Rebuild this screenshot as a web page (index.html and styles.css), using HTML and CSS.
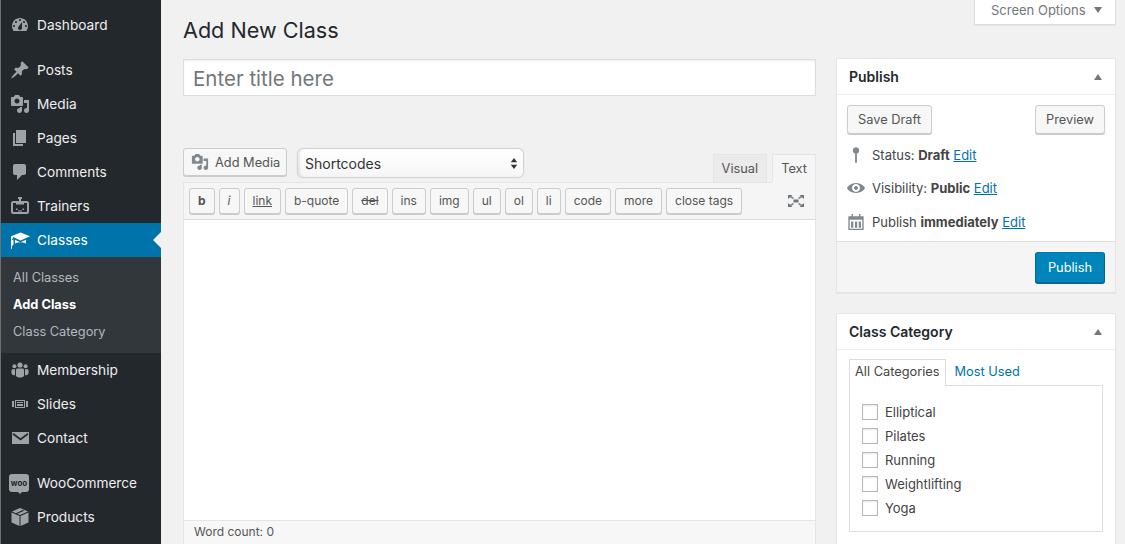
FILE: index.html
```html
<!DOCTYPE html>
<html lang="en">
<head>
  <meta charset="UTF-8">
  <title>Add New Class</title>
  <link rel="stylesheet" href="styles.css">
</head>

<body>

  <!-- Admin menu -->
  <div class="sidebar">
    <a class="menu-item"><svg viewBox="0 0 20 20"><path d="M3.76 16h12.48c1.1-1.37 1.76-3.11 1.76-5 0-4.42-3.58-8-8-8s-8 3.58-8 8c0 1.89.66 3.63 1.76 5zM10 4c.55 0 1 .45 1 1s-.45 1-1 1-1-.45-1-1 .45-1 1-1zM6 6c.55 0 1 .45 1 1s-.45 1-1 1-1-.45-1-1 .45-1 1-1zm8 0c.55 0 1 .45 1 1s-.45 1-1 1-1-.45-1-1 .45-1 1-1zm-5.37 5.55L12 7v6c0 1.1-.9 2-2 2s-2-.9-2-2c0-.57.24-1.08.63-1.45zM4 10c.55 0 1 .45 1 1s-.45 1-1 1-1-.45-1-1 .45-1 1-1zm12 0c.55 0 1 .45 1 1s-.45 1-1 1-1-.45-1-1 .45-1 1-1z" fill-rule="evenodd"/></svg>Dashboard</a>
    <div class="menu-sep"></div>
    <a class="menu-item"><svg viewBox="0 0 20 20"><path d="M10.44 3.02l1.82-1.82 6.36 6.35-1.83 1.82c-1.05-.68-2.48-.57-3.41.36l-.75.75c-.92.93-1.04 2.35-.35 3.41l-1.83 1.82-2.41-2.41-2.8 2.79c-.42.42-3.38 2.71-3.8 2.29s1.86-3.39 2.28-3.81l2.79-2.79L4.1 9.36l1.83-1.82c1.05.69 2.48.57 3.4-.36l.75-.75c.93-.92 1.05-2.35.36-3.41z"/></svg>Posts</a>
    <a class="menu-item"><svg viewBox="0 0 20 20"><path d="M13 11V4c0-.55-.45-1-1-1h-1.67L9 1H5L3.67 3H2c-.55 0-1 .45-1 1v7c0 .55.45 1 1 1h10c.55 0 1-.45 1-1zM7 4.5c1.38 0 2.5 1.12 2.5 2.5S8.38 9.5 7 9.5 4.5 8.38 4.5 7 5.62 4.5 7 4.5zM14 6h5v10.5c0 1.38-1.12 2.5-2.5 2.5S14 17.88 14 16.5s1.12-2.5 2.5-2.5c.17 0 .34.02.5.05V9h-3V6zm-4 8.05V13h2v3.5c0 1.38-1.12 2.5-2.5 2.5S7 17.88 7 16.5 8.12 14 9.5 14c.17 0 .34.02.5.05z"/></svg>Media</a>
    <a class="menu-item"><svg viewBox="0 0 20 20"><path d="M6 15V2h10v13H6zm-1 1h8v2H3V5h2v11z"/></svg>Pages</a>
    <a class="menu-item"><svg viewBox="0 0 20 20"><path d="M5 2h9c1.1 0 2 .9 2 2v7c0 1.1-.9 2-2 2h-2l-5 5v-5H5c-1.1 0-2-.9-2-2V4c0-1.1.9-2 2-2z"/></svg>Comments</a>
    <a class="menu-item"><svg viewBox="0 0 20 20"><path d="M8 1h4v2h-1v2h6c1 0 2 1 2 2v9c0 1-1 2-2 2H3c-1 0-2-1-2-2V7c0-1 1-2 2-2h6V3H8V1zM3 7v9h14V7h-3v1.500H6V7H3zm3 5.500h1.500V14H6v-1.500zm6.500 0H14V14h-1.500v-1.500zM8 14.500h4v1H8v-1z" fill-rule="evenodd"/></svg>Trainers</a>
    <a class="menu-item current"><svg viewBox="0 0 20 20"><path d="M10.500 2.500L20 6.200l-9.500 4.300L3 7v1.500l-1 .3v10H1V6.200zM5 9.800l5.500 2.500L16 9.800v3.700c-1.800-.9-3.600-1.300-5.500-1.300S6.800 12.600 5 13.500V9.800zM2 10v6l1.500-1.500V9.500z"/></svg>Classes</a>
    <div class="submenu">
      <a>All Classes</a>
      <a class="active">Add Class</a>
      <a>Class Category</a>
    </div>
    <a class="menu-item"><svg viewBox="0 0 20 20"><circle cx="10" cy="5" r="2.600"/><circle cx="4.400" cy="6.300" r="2"/><circle cx="15.600" cy="6.300" r="2"/><path d="M7.500 8.500h5c.9 0 1.500.7 1.500 1.600V16c-1 1-2.500 1.600-4 1.600S7 17 6 16v-5.900c0-.9.6-1.600 1.500-1.600zM2.500 9.200H5v6l-1 .1C2.500 15 1.500 14 1.500 13v-2.500c0-.7.4-1.300 1-1.300zM15 9.200h2.500c.6 0 1 .6 1 1.300V13c0 1-1 2-2.500 2.300l-1-.1z"/></svg>Membership</a>
    <a class="menu-item"><svg viewBox="0 0 20 20"><path d="M5 14V6h10v8H5zm-3-1V7h2v6H2zm4-6v6h8V7H6zm10 0h2v6h-2V7zm-3 2V8H7v1h6zm0 3v-2H7v2h6z" fill-rule="evenodd"/></svg>Slides</a>
    <a class="menu-item"><svg viewBox="0 0 20 20"><path fill-rule="evenodd" d="M2 4h17v12H2zM3.500 5L10.500 10.200 17.500 5l1 1.500-8 6-8-6z"/></svg>Contact</a>
    <div class="menu-sep"></div>
    <a class="menu-item"><span class="woo-icon">woo</span>WooCommerce</a>
    <a class="menu-item"><svg viewBox="0 0 20 20"><path d="M10 1l8 3.500-8 3.500-2.800-1.200 7-3.100-1.400-.6-7 3.100L2 4.500zM1.500 5.500L9.500 9v10l-8-3.500zM10.500 9l8-3.500v10l-8 3.500z"/></svg>Products</a>
  </div>

  <!-- Page content -->
  <div class="content">
    <div class="screen-options">Screen Options <span class="arrow-down"></span></div>

    <h1 class="page-title">Add New Class</h1>

    <div class="columns">
      <div class="main-col">
        <div class="title-input">Enter title here</div>

        <div class="editor-tools">
          <a class="btn media-btn"><svg viewBox="0 0 20 20"><path d="M13 11V4c0-.55-.45-1-1-1h-1.67L9 1H5L3.67 3H2c-.55 0-1 .45-1 1v7c0 .55.45 1 1 1h10c.55 0 1-.45 1-1zM7 4.500c1.380 0 2.500 1.120 2.500 2.500S8.380 9.500 7 9.500 4.500 8.380 4.500 7 5.620 4.500 7 4.500zM14 6h5v10.500c0 1.380-1.120 2.500-2.500 2.500S14 17.880 14 16.500s1.120-2.500 2.500-2.500c.17 0 .34.02.5.05V9h-3V6zm-4 8.050V13h2v3.500c0 1.380-1.120 2.500-2.500 2.500S7 17.880 7 16.500 8.120 14 9.500 14c.17 0 .34.02.5.05z"/></svg>Add Media</a>
          <div class="shortcodes">Shortcodes<svg viewBox="0 0 10 16"><path d="M5 1l4 5.500H1zM5 15l4-5.500H1z"/></svg></div>
          <div class="editor-tabs">
            <a class="tab">Visual</a>
            <a class="tab on">Text</a>
          </div>
        </div>

        <div class="editor">
          <div class="quicktags">
            <a class="qt bold">b</a>
            <a class="qt ital">i</a>
            <a class="qt link">link</a>
            <a class="qt">b-quote</a>
            <a class="qt strike">del</a>
            <a class="qt">ins</a>
            <a class="qt">img</a>
            <a class="qt">ul</a>
            <a class="qt">ol</a>
            <a class="qt">li</a>
            <a class="qt">code</a>
            <a class="qt">more</a>
            <a class="qt">close tags</a>
            <svg class="fullscreen" viewBox="0 0 18 14"><path d="M1 1h4.500L4.200 2.300 7 4l-1 1-2.800-1.700L1 5zM17 1h-4.500l1.300 1.300L11 4l1 1 2.800-1.700L17 5zM1 13h4.500l-1.300-1.300L7 10 6 9l-2.800 1.700L1 9zM17 13h-4.500l1.300-1.300L11 10l1-1 2.800 1.700L17 9zM6.500 5.500h5v3h-5z"/></svg>
          </div>
          <div class="editor-area"></div>
          <div class="word-count">Word count: 0</div>
        </div>
      </div>

      <div class="side-col">
        <!-- Publish box -->
        <div class="postbox">
          <div class="postbox-head">Publish <span class="arrow-up"></span></div>
          <div class="publish-body">
            <div class="publish-actions">
              <a class="btn">Save Draft</a>
              <a class="btn">Preview</a>
            </div>
            <div class="pub-row"><svg viewBox="0 0 20 20"><path d="M10 1.500a3.500 3.500 0 0 1 1 6.850V18.500H9V8.350A3.500 3.500 0 0 1 10 1.500z"/></svg><span>Status: <b>Draft</b> <a>Edit</a></span></div>
            <div class="pub-row"><svg viewBox="0 0 20 20"><path fill-rule="evenodd" d="M10 4.400C3.439 4.400 0 9.232 0 10c0 .766 3.439 5.600 10 5.600 6.560 0 10-4.834 10-5.600 0-.768-3.440-5.600-10-5.600zm0 9.907c-2.455 0-4.445-1.928-4.445-4.307S7.545 5.691 10 5.691s4.444 1.930 4.444 4.309-1.989 4.307-4.444 4.307zM10 7.846c-1.228 0-2.223.965-2.223 2.154s.995 2.154 2.223 2.154c1.227 0 2.223-.965 2.223-2.154S11.227 7.846 10 7.846z"/></svg><span>Visibility: <b>Public</b> <a>Edit</a></span></div>
            <div class="pub-row"><svg viewBox="0 0 20 20"><path fill-rule="evenodd" d="M5 1h1.500v2.500h7V1H15v2.500h3.500V19h-17V3.500H5zM3 7.500V17.500h14V7.500zM4.500 9.500h2.500v7H4.500zM8.800 9.500h2.500v7H8.800zM13 9.500h2.500v7H13z"/></svg><span>Publish <b>immediately</b> <a>Edit</a></span></div>
          </div>
          <div class="publish-foot"><a class="btn primary">Publish</a></div>
        </div>

        <!-- Class Category box -->
        <div class="postbox">
          <div class="postbox-head">Class Category <span class="arrow-up"></span></div>
          <div class="category-body">
            <div class="cat-tabs">
              <a class="cat-tab on">All Categories</a>
              <a class="cat-tab">Most Used</a>
            </div>
            <div class="cat-panel">
              <label class="cat-row"><span class="check"></span>Elliptical</label>
              <label class="cat-row"><span class="check"></span>Pilates</label>
              <label class="cat-row"><span class="check"></span>Running</label>
              <label class="cat-row"><span class="check"></span>Weightlifting</label>
              <label class="cat-row"><span class="check"></span>Yoga</label>
            </div>
          </div>
        </div>
      </div>
    </div>
  </div>

</body>
</html>
```

FILE: styles.css
```css
html, body {
  height: 544px;
}

body {
  margin: 0;
  display: flex;
  overflow: hidden;
  background: #f1f1f1;
  color: #444;
  font-family: Inter, "Noto Sans", sans-serif;
  font-size: 13px;
}

a {
  color: #0073aa;
}

/* Admin menu */
.sidebar {
  width: 160px;
  flex-shrink: 0;
  padding-top: 8px;
  background: #23282d;
  border-left: 1px solid #6d7073;
}

.menu-item {
  display: flex;
  align-items: center;
  height: 34px;
  box-sizing: border-box;
  padding: 0 0 1px 9px;
  color: #eee;
  font-size: 13.7px;
  position: relative;
}

.menu-item svg {
  width: 20px;
  height: 20px;
  margin: 1px 7px 0 0;
  fill: #9ea3a8;
  flex-shrink: 0;
}

.menu-sep {
  height: 11px;
}

.menu-item.current {
  background: #0073aa;
  color: #fff;
}

.menu-item.current svg {
  fill: #fff;
}

.menu-item.current::after {
  content: "";
  position: absolute;
  right: 0;
  top: 9px;
  border: 8px solid transparent;
  border-right-color: #f1f1f1;
  border-left-width: 0;
}

.woo-icon {
  width: 20px;
  height: 18px;
  margin: 0 8px 0 -1px;
  border-radius: 3px;
  background: #9ea3a8;
  color: #23282d;
  font-size: 8px;
  font-weight: 700;
  line-height: 18px;
  text-align: center;
  position: relative;
}

.woo-icon::after {
  content: "";
  position: absolute;
  left: 9px;
  bottom: -2px;
  border: 2px solid transparent;
  border-top-color: #9ea3a8;
  border-bottom: none;
}

.submenu {
  display: flex;
  flex-direction: column;
  height: 96px;
  padding-top: 7px;
  box-sizing: border-box;
  background: #32373c;
}

.submenu a {
  height: 27px;
  line-height: 27px;
  padding-left: 12px;
  color: #b4b9be;
  font-size: 12.8px;
}

.submenu a.active {
  color: #fff;
  font-weight: 700;
}

/* Page content */
.content {
  flex: 1;
  padding-left: 22px;
  position: relative;
}

.screen-options {
  position: absolute;
  top: 0;
  right: 9px;
  width: 142px;
  height: 25px;
  box-sizing: border-box;
  padding-left: 16px;
  line-height: 20px;
  background: #fff;
  border: 1px solid #ddd;
  border-top: none;
  box-shadow: 0 1px 1px rgba(0,0,0,0.04);
  color: #72777c;
}

.arrow-down {
  display: inline-block;
  margin-left: 5px;
  vertical-align: 2px;
  border: 4.5px solid transparent;
  border-top: 6px solid #72777c;
  border-bottom: none;
}

.page-title {
  margin: 0;
  height: 59px;
  line-height: 60px;
  color: #23282d;
  font-size: 21.6px;
  font-weight: 400;
}

.columns {
  display: flex;
  gap: 20px;
  width: 933px;
}

.main-col {
  width: 633px;
  flex-shrink: 0;
}

.title-input {
  height: 37px;
  box-sizing: border-box;
  padding-left: 9px;
  line-height: 37px;
  background: #fff;
  border: 1px solid #ddd;
  box-shadow: inset 0 1px 2px rgba(0,0,0,0.07);
  color: #72777c;
  font-size: 20.5px;
}

/* Buttons */
.btn {
  display: inline-flex;
  align-items: center;
  justify-content: center;
  height: 29px;
  box-sizing: border-box;
  padding: 0 10px;
  background: #f7f7f7;
  border: 1px solid #ccc;
  border-radius: 3px;
  box-shadow: 0 1px 0 #ccc;
  color: #555;
  font-size: 12.8px;
}

.btn.primary {
  height: 31px;
  width: 70px;
  background: #0085ba;
  border-color: #0073aa #006799 #006799;
  box-shadow: 0 1px 0 #006799;
  color: #fff;
}

/* Editor */
.editor-tools {
  display: flex;
  align-items: flex-end;
  height: 87px;
  margin-top: -1px;
  position: relative;
}

.media-btn {
  width: 104px;
  height: 28px;
  padding: 0 0 0 7px;
  justify-content: flex-start;
  margin-bottom: 6px;
}

.media-btn svg {
  width: 18px;
  height: 18px;
  margin-right: 6px;
  fill: #82878c;
}

.shortcodes {
  display: flex;
  align-items: center;
  justify-content: space-between;
  width: 225px;
  height: 28px;
  margin: 0 0 5px 11px;
  padding: 0 5px 0 7px;
  box-sizing: border-box;
  border-radius: 5px;
  background: linear-gradient(#fff, #f6f6f6);
  box-shadow: 0 0 2px rgba(0,0,0,0.45), inset 2px 0 2px rgba(0,0,0,0.08);
  color: #333;
  font-size: 14px;
}

.shortcodes svg {
  width: 8px;
  height: 13px;
  fill: #333;
}

.editor-tabs {
  display: flex;
  gap: 5px;
  margin-left: auto;
  margin-bottom: -1px;
}

.tab {
  height: 29px;
  box-sizing: border-box;
  padding: 0 8px;
  line-height: 28px;
  background: #ebebeb;
  border: 1px solid #e5e5e5;
  color: #555;
  font-size: 12.8px;
}

.tab.on {
  background: #f5f5f5;
  border-bottom-color: #f5f5f5;
  position: relative;
}

.editor {
  height: 363px;
  display: flex;
  flex-direction: column;
  background: #fff;
  border: 1px solid #e5e5e5;
  box-sizing: border-box;
}

.quicktags {
  display: flex;
  align-items: center;
  gap: 4px;
  height: 37px;
  flex-shrink: 0;
  padding-left: 5px;
  box-sizing: border-box;
  background: #f5f5f5;
  border-bottom: 1px solid #ddd;
}

.qt {
  height: 26px;
  box-sizing: border-box;
  padding: 0 8px;
  line-height: 24px;
  background: #f7f7f7;
  border: 1px solid #ccc;
  border-radius: 3px;
  box-shadow: 0 1px 0 #ccc;
  color: #555;
  font-size: 12px;
}

.qt.bold {
  font-weight: 700;
}

.qt.ital {
  font-style: italic;
}

.qt.link {
  text-decoration: underline;
}

.qt.strike {
  text-decoration: line-through;
}

.fullscreen {
  width: 18px;
  height: 14px;
  margin-left: auto;
  margin-right: 10px;
  fill: #72777c;
}

.editor-area {
  flex: 1;
}

.word-count {
  height: 23px;
  padding-left: 10px;
  line-height: 21px;
  background: #f7f7f7;
  border-top: 1px solid #e5e5e5;
  color: #555;
  font-size: 12px;
}

/* Side boxes */
.side-col {
  width: 280px;
  flex-shrink: 0;
  margin-top: -1px;
}

.postbox {
  margin-bottom: 20px;
  background: #fff;
  border: 1px solid #e5e5e5;
  box-shadow: 0 1px 1px rgba(0,0,0,0.04);
}

.postbox-head {
  display: flex;
  justify-content: space-between;
  align-items: center;
  height: 36px;
  box-sizing: border-box;
  padding: 0 13px 0 12px;
  border-bottom: 1px solid #eee;
  color: #23282d;
  font-size: 14px;
  font-weight: 600;
}

.arrow-up {
  border: 4.500px solid transparent;
  border-bottom: 6px solid #72777c;
  border-top: none;
}

.publish-body {
  height: 146px;
  padding: 10px 10px 0;
  box-sizing: border-box;
}

.publish-actions {
  display: flex;
  justify-content: space-between;
  margin-bottom: 4px;
}

.publish-foot {
  display: flex;
  justify-content: flex-end;
  height: 51px;
  padding: 10px 10px 0;
  box-sizing: border-box;
  background: #f5f5f5;
  border-top: 1px solid #ddd;
}

.pub-row {
  display: flex;
  align-items: center;
  height: 33.5px;
}

.pub-row svg {
  width: 18px;
  height: 18px;
  margin-right: 7px;
  fill: #82878c;
  flex-shrink: 0;
}

.pub-row a {
  text-decoration: underline;
}

.category-body {
  height: 300px;
  padding: 9px 12px 0;
  box-sizing: border-box;
}

.cat-tabs {
  display: flex;
  margin-bottom: -1px;
}

.cat-tab {
  height: 27px;
  box-sizing: border-box;
  padding: 0 5px;
  line-height: 23px;
  border: 1px solid transparent;
  border-bottom: none;
  font-size: 12.8px;
  position: relative;
}

.cat-tab.on {
  background: #fff;
  border-color: #ddd;
  color: #444;
  margin-right: 3px;
}

.cat-panel {
  width: 254px;
  height: 147px;
  box-sizing: border-box;
  padding: 14px 0 0 12px;
  border: 1px solid #ddd;
}

.cat-row {
  display: flex;
  align-items: center;
  height: 24px;
}

.check {
  width: 16px;
  height: 16px;
  box-sizing: border-box;
  margin-right: 7px;
  background: #fff;
  border: 1px solid #b4b9be;
  box-shadow: inset 0 1px 2px rgba(0,0,0,0.1);
}
```
